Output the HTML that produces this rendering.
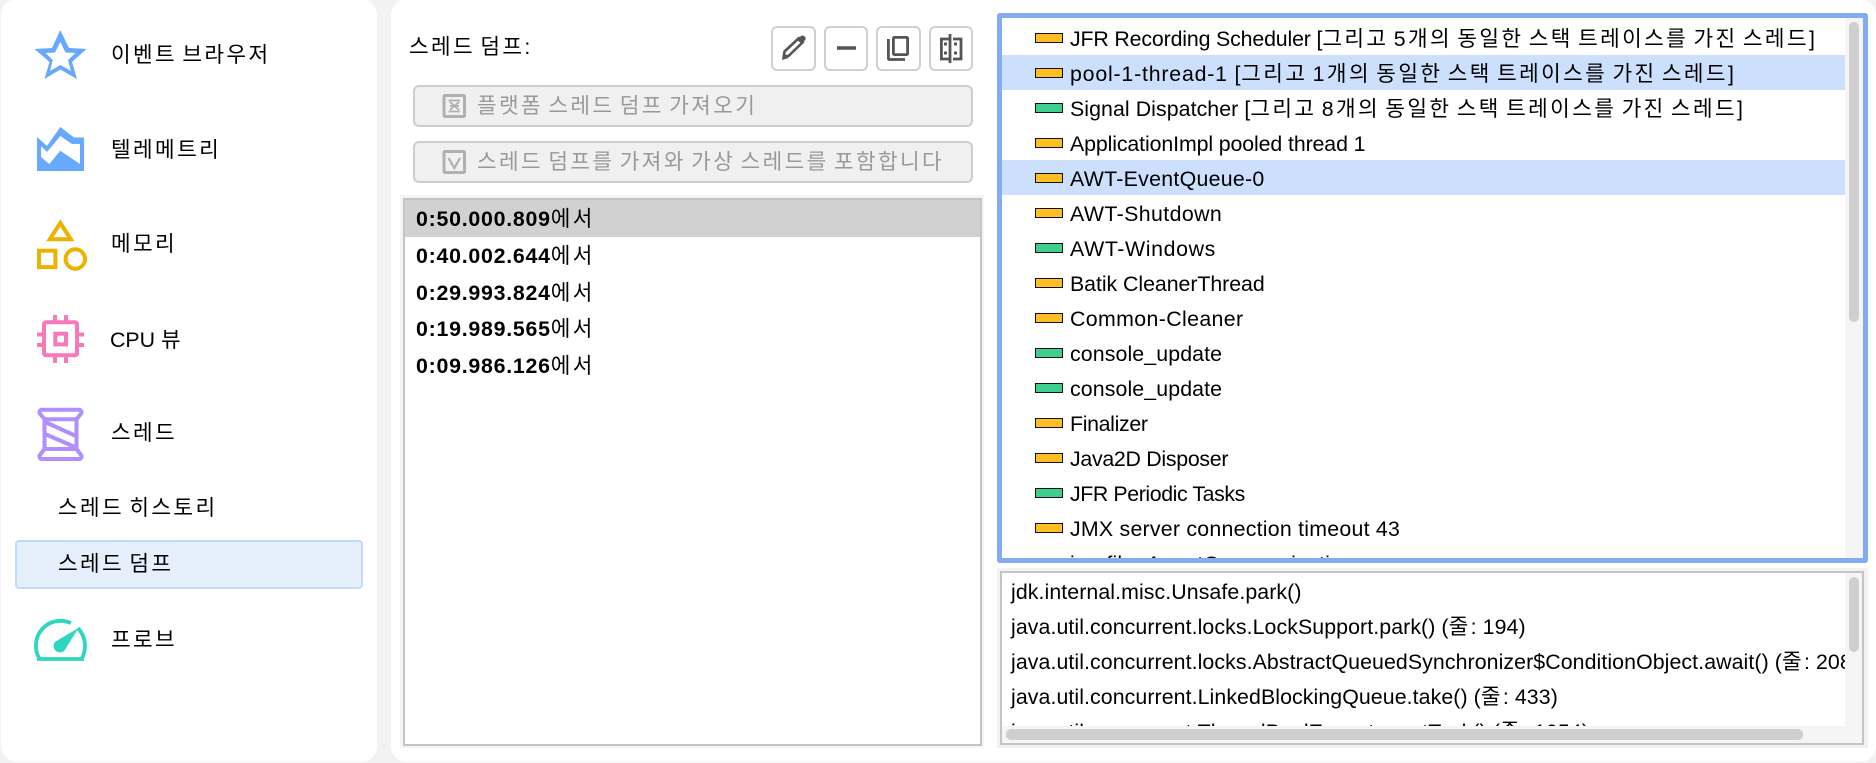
<!DOCTYPE html>
<html lang="ko"><head><meta charset="utf-8"><title>스레드 덤프</title>
<style>
html,body{margin:0;padding:0;width:1876px;height:763px;overflow:hidden;background:#f2f2f2}
body{position:relative;font-family:"Liberation Sans","Noto Sans CJK KR",sans-serif;font-size:21.33px;color:#000}
.a{position:absolute}
.t{position:absolute;white-space:nowrap;line-height:30px;height:30px}
.k{letter-spacing:2.4px;word-spacing:-3px}
.n{letter-spacing:.2px}
.d{letter-spacing:.08px}
.chip{position:absolute;left:1035px;width:26px;height:8px;border:1.5px solid #111;background:#fdbf24}
.g{background:#3ecf8e}
.tb{position:absolute;top:26px;height:41px;border:2px solid #cfcfcf;border-radius:6px;background:#fff}
.wb{position:absolute;left:413px;width:556px;height:38px;border:2px solid #cdcdcd;border-radius:6px;background:#f0f0f0}
.gr{color:#999}
b{font-weight:bold;letter-spacing:.75px}
</style></head><body>
<div class="a" style="left:1px;top:-1px;width:376px;height:763px;background:#fff;border-radius:16px"></div>
<div class="a" style="left:391px;top:-1px;width:1485px;height:763px;background:#fff;border-radius:16px"></div>

<div class="a" style="left:15px;top:540px;width:344px;height:45px;background:#e6f0fd;border:2px solid #bfdbff;border-radius:4px"></div>
<div class="t k" style="left:111px;top:40px">이벤트 브라우저</div>
<div class="t k" style="left:111px;top:135px">텔레메트리</div>
<div class="t k" style="left:111px;top:229px">메모리</div>
<div class="t" style="left:110px;top:325px">CPU <span class="k">뷰</span></div>
<div class="t k" style="left:111px;top:418px">스레드</div>
<div class="t k" style="left:58px;top:493px">스레드 히스토리</div>
<div class="t k" style="left:58px;top:549px">스레드 덤프</div>
<div class="t k" style="left:111px;top:625px">프로브</div>

<svg class="a" style="left:0;top:0" width="380" height="763" viewBox="0 0 380 763">
<path fill="#66a9ff" fill-rule="evenodd" d="M60.3 30L69 48 86.500 49 72 62 77 79 60.300 69.500 44.500 79 49.500 62 34.500 49 52 48ZM60.300 42L55 52.500 45.500 53 52.800 60 50 71 60.300 65 71 71 68 60 75.500 53 65.500 52.500Z"/>
<path fill="#66a9ff" fill-rule="evenodd" d="M37 137L47 146 60.300 127 74 137.500 84 137.500 84 171 37 171ZM41 146V157L49.300 164 60.300 150.700 80 164V144H72L60.300 136 47 152Z"/>
<path fill="none" stroke="#edb200" stroke-width="4" d="M60.300 223L70.800 239.300H49.800Z"/>
<rect x="39" y="250.700" width="16.400" height="16.400" fill="none" stroke="#edb200" stroke-width="4"/>
<circle cx="75.300" cy="259" r="9.700" fill="none" stroke="#edb200" stroke-width="4"/>
<g fill="none" stroke="#f77ab8" stroke-width="4">
<rect x="44" y="322.300" width="33" height="33" rx="2"/>
<rect x="55.300" y="333.700" width="10.700" height="10.700"/>
<path d="M55 315v6M66 315v6M55 357v6M66 357v6M37 334.500h6M37 345h6M78 334.500h6M78 345h6"/>
</g>
<g fill="none" stroke="#b18fff" stroke-width="4" stroke-linejoin="round">
<path d="M42 409.700H79a2.500 2.500 0 0 1 2 4L76.500 419.300H44.500L40 413.700a2.500 2.500 0 0 1 2-4Z"/>
<path d="M44.500 419V449M76.500 419V449"/>
<path d="M44.500 449H76.500L81 455a2.500 2.500 0 0 1-2 4H42a2.500 2.500 0 0 1-2-4Z"/>
<path d="M45 422L76 436M45 434L76 447.500"/>
</g>
<path fill="none" stroke="#2ed6c0" stroke-width="3.800" d="M39.500 659C36 653 36 649 36 645A24.500 24.500 0 0 1 60.500 620.800C64 620.800 67 621.500 71 623M78 628C83 634 85 640 85 645C85 650 84 655 81.500 659M37 659H84"/>
<path fill="#2ed6c0" d="M78.500 628L64.500 650.500A6 6 0 1 1 55.500 641.500Z"/>
</svg>

<div class="t k" style="left:409px;top:32px">스레드 덤프:</div>
<div class="tb" style="left:771px;width:41px"></div>
<div class="tb" style="left:824px;width:40px"></div>
<div class="tb" style="left:876px;width:41px"></div>
<div class="tb" style="left:929px;width:40px"></div>
<div class="wb" style="top:85px"></div>
<div class="wb" style="top:141px"></div>
<svg class="a" style="left:770px;top:20px" width="205" height="60" viewBox="770 20 205 60">
<path fill="none" stroke="#555" stroke-width="2.600" stroke-linejoin="round" d="M784 56L784.500 51.500 799 38 803 42 788.500 56Z"/>
<path fill="#555" d="M797 39.500L801 36C803 34.500 806.500 37 805.500 39.500L801.500 44ZM783 53L788.500 58 782 60Z"/>
<path fill="none" stroke="#555" stroke-width="3.600" d="M837 48H856"/>
<g fill="none" stroke="#555" stroke-width="2.800">
<rect x="893.400" y="37.400" width="14.200" height="17.200" rx="1"/>
<path d="M888.400 39V58.500a1 1 0 0 0 1 1H905"/>
<path d="M950 39H941.400V59H950M950 34V63M953 39H961V59H953"/>
</g>
<path fill="#555" d="M944 42.500h3v3h-3zM944 51.500h3v3h-3zM954 42.500h3v3h-3zM954 51.500h3v3h-3z"/>
</svg>
<svg class="a" style="left:435px;top:85px" width="40" height="95" viewBox="435 85 40 95">
<g fill="none" stroke="#b0b0b0" stroke-width="3">
<rect x="444" y="95.500" width="20.500" height="21" rx="1"/>
<rect x="444" y="151.500" width="20.500" height="21" rx="1"/>
<path stroke-width="2.200" d="M448.500 158L454.300 168 460 158"/>
<path stroke-width="1.800" d="M448.500 100.500H460M448.500 111.500H460M450 102L459 110M459 102L450 110M450 106H459"/>
</g></svg>
<div class="t k gr" style="left:477px;top:91px">플랫폼 스레드 덤프 가져오기</div>
<div class="t k gr" style="left:477px;top:147px">스레드 덤프를 가져와 가상 스레드를 포함합니다</div>

<div class="a" style="left:400px;top:195px;width:584px;height:553px;background:#f4f4f4"></div>
<div class="a" style="left:403px;top:198px;width:575px;height:544px;border:2px solid #c4c4c4;background:#fff"></div>
<div class="a" style="left:405px;top:200px;width:575px;height:37px;background:#d1d1d1"></div>
<div class="t" style="left:416px;top:204px"><b>0:50.000.809</b><span class="k">에서</span></div>
<div class="t" style="left:416px;top:241px"><b>0:40.002.644</b><span class="k">에서</span></div>
<div class="t" style="left:416px;top:278px"><b>0:29.993.824</b><span class="k">에서</span></div>
<div class="t" style="left:416px;top:314px"><b>0:19.989.565</b><span class="k">에서</span></div>
<div class="t" style="left:416px;top:351px"><b>0:09.986.126</b><span class="k">에서</span></div>

<div class="a" style="left:997px;top:13px;width:871px;height:550px;background:#84abf2;border-radius:3px"></div>
<div class="a" style="left:1002px;top:18px;width:861px;height:540px;background:#fff;overflow:hidden">
<div class="a" style="left:0;top:37px;width:843px;height:35px;background:#cce0fd"></div>
<div class="a" style="left:0;top:142px;width:843px;height:35px;background:#cce0fd"></div>
<div class="a" style="left:843px;top:0;width:18px;height:540px;background:#f5f5f5"></div>
<div class="a" style="left:847px;top:4px;width:10px;height:300px;background:#cfcfcf;border-radius:5px"></div>
<div class="t n" style="left:68px;top:531px">jprofiler AgentCommunication</div>
</div>
<div class="chip" style="top:33px"></div>
<div class="chip" style="top:68px"></div>
<div class="chip g" style="top:103px"></div>
<div class="chip" style="top:138px"></div>
<div class="chip" style="top:173px"></div>
<div class="chip" style="top:208px"></div>
<div class="chip g" style="top:243px"></div>
<div class="chip" style="top:278px"></div>
<div class="chip" style="top:313px"></div>
<div class="chip g" style="top:348px"></div>
<div class="chip g" style="top:383px"></div>
<div class="chip" style="top:418px"></div>
<div class="chip" style="top:453px"></div>
<div class="chip g" style="top:488px"></div>
<div class="chip" style="top:523px"></div>
<div class="t" style="left:1070px;top:24px;letter-spacing:-.15px">JFR Recording Scheduler [<span class="k">그리고 5개의 동일한 스택 트레이스를 가진 스레드</span>]</div>
<div class="t" style="left:1070px;top:59px;letter-spacing:.8px">pool-1-thread-1 [<span class="k">그리고 1개의 동일한 스택 트레이스를 가진 스레드</span>]</div>
<div class="t" style="left:1070px;top:94px;letter-spacing:.07px">Signal Dispatcher [<span class="k">그리고 8개의 동일한 스택 트레이스를 가진 스레드</span>]</div>
<div class="t" style="left:1070px;top:129px;letter-spacing:-.11px">ApplicationImpl pooled thread 1</div>
<div class="t" style="left:1070px;top:164px;letter-spacing:.28px">AWT-EventQueue-0</div>
<div class="t" style="left:1070px;top:199px;letter-spacing:.4px">AWT-Shutdown</div>
<div class="t" style="left:1070px;top:234px;letter-spacing:.63px">AWT-Windows</div>
<div class="t" style="left:1070px;top:269px;letter-spacing:-.05px">Batik CleanerThread</div>
<div class="t" style="left:1070px;top:304px;letter-spacing:.37px">Common-Cleaner</div>
<div class="t" style="left:1070px;top:339px;letter-spacing:.11px">console_update</div>
<div class="t" style="left:1070px;top:374px;letter-spacing:.11px">console_update</div>
<div class="t" style="left:1070px;top:409px;letter-spacing:-.33px">Finalizer</div>
<div class="t" style="left:1070px;top:444px;letter-spacing:-.28px">Java2D Disposer</div>
<div class="t" style="left:1070px;top:479px;letter-spacing:-.4px">JFR Periodic Tasks</div>
<div class="t" style="left:1070px;top:514px;letter-spacing:.24px">JMX server connection timeout 43</div>

<div class="a" style="left:997px;top:568px;width:871px;height:180px;background:#f2f2f2"></div>
<div class="a" style="left:1000px;top:571px;width:860px;height:170px;border:2px solid #c4c4c4;background:#fff;overflow:hidden">
<div class="t d" style="left:9px;top:4px">jdk.internal.misc.Unsafe.park()</div>
<div class="t d" style="left:9px;top:39px">java.util.concurrent.locks.LockSupport.park() (<span class="k">줄</span>: 194)</div>
<div class="t d" style="left:9px;top:74px">java.util.concurrent.locks.AbstractQueuedSynchronizer$ConditionObject.await() (<span class="k">줄</span>: 2081)</div>
<div class="t d" style="left:9px;top:109px">java.util.concurrent.LinkedBlockingQueue.take() (<span class="k">줄</span>: 433)</div>
<div class="t d" style="left:9px;top:144px">java.util.concurrent.ThreadPoolExecutor.getTask() (<span class="k">줄</span>: 1054)</div>
<div class="a" style="left:843px;top:0;width:18px;height:172px;background:#f5f5f5"></div>
<div class="a" style="left:0;top:153px;width:862px;height:18px;background:#f5f5f5"></div>
<div class="a" style="left:847px;top:4px;width:10px;height:75px;background:#cfcfcf;border-radius:5px"></div>
<div class="a" style="left:4px;top:156px;width:797px;height:11px;background:#cfcfcf;border-radius:5px"></div>
</div>
</body></html>
